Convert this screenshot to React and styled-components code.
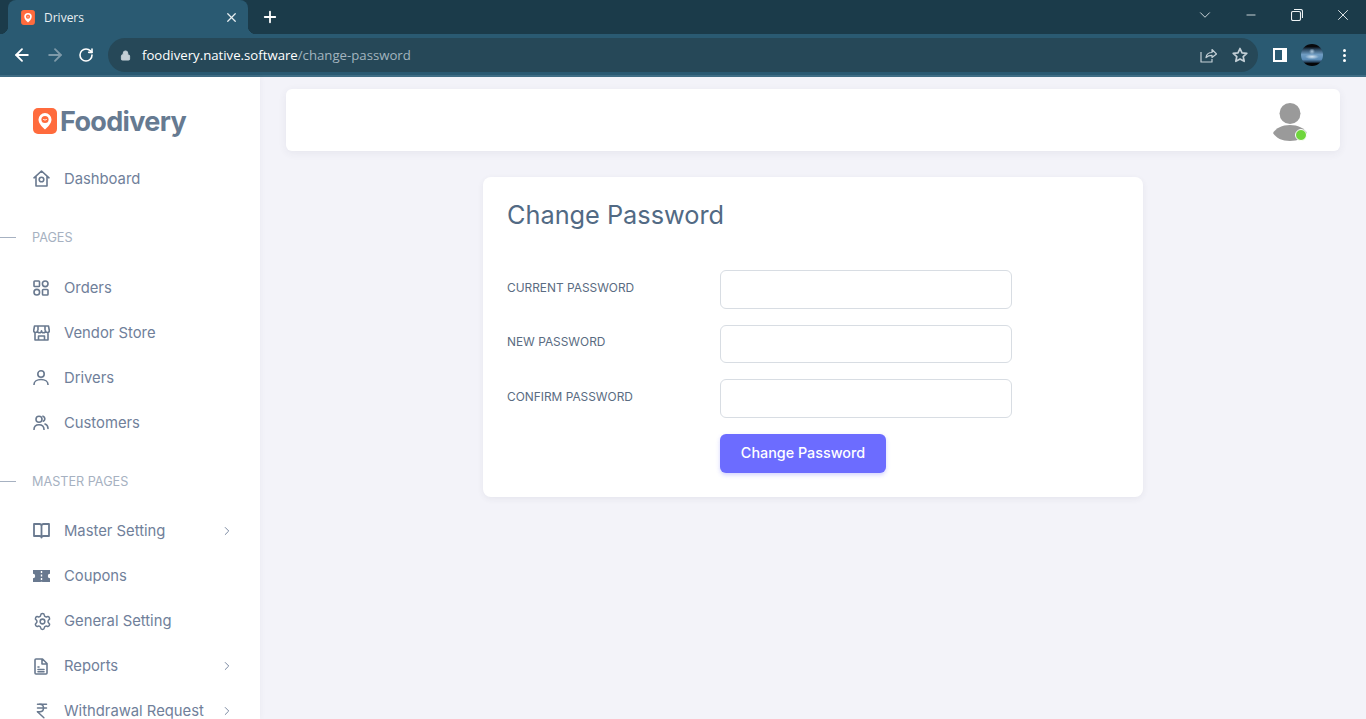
import React from "react";
import styled, { createGlobalStyle } from "styled-components";
import { ArrowLeft, ArrowRight, RotateCw, Lock, X, Plus, ChevronDown, Minus, ChevronRight, Settings, IndianRupee } from "lucide-react";

const Global = createGlobalStyle`
  html, body { margin: 0; height: 100%; overflow: hidden; background: #f3f3f9; }
  * { box-sizing: border-box; }
  #root { height: 100%; }
`;

const Shell = styled.div`
  display: flex; flex-direction: column; height: 719px; overflow: hidden;
  font-family: Inter, "Liberation Sans", sans-serif;
`;
const TabStrip = styled.div`
  height: 34px; background: #1b3b4a; display: flex; align-items: flex-end; padding-left: 8px; color: #fff;
  font-family: "Open Sans", "Noto Sans", sans-serif;
`;
const Tab = styled.div`
  position: relative; width: 240px; height: 34px; background: #2a5a72; border-radius: 8px 8px 0 0;
  display: flex; align-items: center; padding: 0 9px 0 13px; font-size: 12px; color: #e8eef1;
  &::before, &::after { content: ""; position: absolute; bottom: 0; width: 8px; height: 8px; }
  &::before { left: -8px; background: radial-gradient(circle at 0 0, #1b3b4a 8px, #2a5a72 8.5px); }
  &::after { right: -8px; background: radial-gradient(circle at 100% 0, #1b3b4a 8px, #2a5a72 8.5px); }
`;
const TabTitle = styled.span` margin-left: 9px; flex: 1; `;
const NewTab = styled.div` display: flex; margin-left: 13px; align-self: center; `;
const WindowControls = styled.div`
  margin-left: auto; display: flex; align-self: flex-start; color: #eef3f5;
`;
const WindowButton = styled.div`
  width: 46px; height: 29px; display: flex; align-items: center; justify-content: center;
`;
const Toolbar = styled.div`
  height: 43px; background: #2a5a72; border-bottom: 2px solid #3f6d85; display: flex; align-items: center; color: #fff;
  padding-top: 1px; font-family: "Open Sans", "Noto Sans", sans-serif;
`;
const NavButton = styled.div`
  width: 32px; display: flex; justify-content: center; flex: none; color: ${p => p.$dim ? "#7e9aa9" : "#fff"};
  padding-top: ${p => p.$drop || 0}px; margin-left: ${p => p.$shift || 0}px;
`;
const NavButtons = styled.div` display: flex; padding-left: 6px; gap: 0.5px; width: 108px; `;
const Omnibox = styled.div`
  width: 1150px; height: 34px; border-radius: 17px; background: #264858; display: flex; align-items: center; padding: 0 2px 0 12px; flex: none;
`;
const Url = styled.div` margin-left: 11px; font-size: 13.2px; color: #fff; flex: 1; `;
const UrlPath = styled.span` color: #a3b5bf; `;
const OmniIcon = styled.div` width: 32px; display: flex; justify-content: center; color: #c3cfd6; `;
const SidePanelIcon = styled.div`
  margin-left: 15px; width: 14px; height: 14px; border: 2px solid #fff; border-right-width: 5px; flex: none;
`;
const ProfileAvatar = styled.div`
  width: 22px; height: 22px; border-radius: 50%; margin-left: 14px; flex: none;
  background:
    radial-gradient(ellipse 7px 2.5px at 50% 58%, #d5e4f0, transparent),
    radial-gradient(circle 3px at 50% 34%, #a9c4da, transparent),
    linear-gradient(#08090c 0 12%, #2f4e68 26%, #6f9cc2 48%, #5b8db8 70%, #24405a 82%, #050507 88%);
`;
const Dots = styled.div`
  margin-left: 20px; display: flex; flex-direction: column; gap: 2px;
  & > i { display: block; width: 3px; height: 3px; border-radius: 50%; background: #fff; }
`;

const Page = styled.div` flex: 1; display: flex; min-height: 0; background: #f3f3f9; `;
const Sidebar = styled.aside`
  width: 260px; flex: none; background: #fff; box-shadow: 0 0 6px rgba(60,60,90,.06); overflow: hidden; padding-top: 31px; color: #6f7f95;
`;
const Logo = styled.div`
  display: flex; align-items: center; gap: 3px; padding-left: 33px; height: 26px; margin-bottom: 22.5px;
  font-size: 27px; font-weight: 700; color: #667a91; letter-spacing: -0.65px;
`;
const NavItem = styled.div`
  height: 44.9px; display: flex; align-items: center; padding-left: 33px; padding-right: 26px; font-size: 14.8px; color: #70809a;
`;
const IconSlot = styled.span` width: 31px; flex: none; display: flex; align-items: center; color: #69798f; `;
const ItemLabel = styled.span` flex: 1; white-space: nowrap; `;
const Section = styled.div`
  height: 64px; padding-top: ${p => p.$top}px; display: flex; align-items: center; gap: 16px; font-size: 12.65px; color: #a6b1c1;
  &::before { content: ""; width: 16px; height: 1px; background: #a6b1c1; }
`;

const Main = styled.main` flex: 1; min-width: 0; display: flex; flex-direction: column; align-items: center; padding: 12px 26px 0; `;
const TopBar = styled.header`
  width: 100%; height: 62px; background: #fff; border-radius: 6px; box-shadow: 0 2px 8px rgba(60,60,90,.07);
  display: flex; align-items: center; justify-content: flex-end; padding-right: 33px;
`;
const AvatarWrap = styled.div` position: relative; width: 34px; height: 38px; margin-top: 3px; `;
const OnlineDot = styled.span`
  position: absolute; right: 0; bottom: 0; width: 12px; height: 12px; border-radius: 50%; background: #6fd63c; border: 1.5px solid #fff;
`;
const Card = styled.section`
  width: 660px; margin-top: 26px; height: 320px; background: #fff; border-radius: 8px; box-shadow: 0 2px 6px rgba(60,60,90,.07); padding: 21px 24px 0;
`;
const Title = styled.h1`
  margin: 0 0 38px; font-size: 25.3px; line-height: 34px; font-weight: 400; color: #526a84;
`;
const FormRow = styled.div` display: flex; align-items: center; height: 38.5px; margin-bottom: 16px; `;
const FieldLabel = styled.label` width: 213px; flex: none; font-size: 11.9px; color: #5a6c82; margin-bottom: 4px; `;
const Input = styled.input`
  width: 292px; height: 38.5px; border: 1px solid #d8dde3; border-radius: 6px; background: #fff; outline: none;
`;
const ActionRow = styled.div` padding-left: 213px; `;
const Submit = styled.button`
  width: 166px; height: 39px; border: 0; border-radius: 6px; background: #6c6cff; color: #fff; font: 500 14.35px Inter, sans-serif;
  padding: 0 0 2px; box-shadow: 0 2px 4px rgba(108,108,255,.3);
`;

const s = { fill: "none", stroke: "currentColor", strokeLinecap: "round", strokeLinejoin: "round" };
const HomeIcon = () => <svg width="17" height="17" viewBox="0 0 17 17" {...s} strokeWidth="1.6"><path d="M1 7.800 8.500 1 16 7.800M3 6.500V16h11V6.500" /><circle cx="8.500" cy="9.500" r="2.300" /></svg>;
const GridIcon = () => <svg width="16" height="16" viewBox="0 0 16 16" {...s} strokeWidth="1.600"><rect x="1" y="1" width="5.500" height="5.500" rx=".8" /><circle cx="12.200" cy="3.800" r="2.800" /><circle cx="3.800" cy="12.200" r="2.800" /><rect x="9.500" y="9.500" width="5.500" height="5.500" rx=".8" /></svg>;
const StoreIcon = () => <svg width="17" height="16" viewBox="0 0 17 16" {...s} strokeWidth="1.600"><path d="M1.500 1h14l.8 4.500a1.900 1.900 0 0 1-3.800.300 2 2 0 0 1-4 0 2 2 0 0 1-4 0A1.900 1.900 0 0 1 .7 5.500zM2 8v7h13V8M5 1v4M12 1v4M5.500 15v-4h6v4" /></svg>;
const UserIcon = () => <svg width="16" height="15" viewBox="0 0 16 15" {...s} strokeWidth="1.600"><circle cx="8" cy="4" r="3.200" /><path d="M1 14.500c0-3 3-5 7-5s7 2 7 5" /></svg>;
const UsersIcon = () => <svg width="16" height="15" viewBox="0 0 16 15" {...s} strokeWidth="1.600"><circle cx="6" cy="4.300" r="3" /><path d="M1 14.500c0-3 2-4.800 5-4.800s5 1.800 5 4.800M10 1.200c1.500.6 2 2 1.700 3.300-.2.800-.7 1.300-1.300 1.700M12 9c2 .7 3 2.500 3 4.500" /></svg>;
const BookIcon = () => <svg width="17" height="16" viewBox="0 0 17 16" {...s} strokeWidth="1.800"><path d="M1 1h5.500c1.200 0 2 .8 2 2v11.500c0-.7-.8-1.500-2-1.500H1zM16 1h-5.500c-1.200 0-2 .8-2 2M8.500 14.500c0-.7.800-1.500 2-1.500H16V1" /></svg>;
const TicketIcon = () => <svg width="17" height="12" viewBox="0 0 17 12"><path fill="currentColor" d="M0 0h17v3.800a2.200 2.200 0 0 0 0 4.400V12H0V8.200a2.200 2.200 0 0 0 0-4.400z" /><path stroke="#fff" strokeWidth="1.400" strokeDasharray="2 1.600" d="M8.500 .9v11" /></svg>;
const DocIcon = () => <svg width="14" height="17" viewBox="0 0 14 17" {...s} strokeWidth="1.600" style={{ marginLeft: 1 }}><path d="M1 2a1 1 0 0 1 1-1h6.500L13 5.500V15a1 1 0 0 1-1 1H2a1 1 0 0 1-1-1zM8 1v5h5M4 9h1M4 11.500h6M4 13.800h6" /></svg>;
const ShareIcon = () => <svg width="17" height="16" viewBox="0 0 17 16" fill="none" stroke="currentColor" strokeWidth="1.200" strokeLinejoin="round"><path d="M1 5v10h11v-3M6 10.500c.5-3.500 3-5 6-5V2.500L16.500 7 12 10.500V8.300c-2.500 0-4.500.7-6 2.200z" /></svg>;
const StarIcon = () => <svg width="16" height="16" viewBox="0 0 16 16" fill="none" stroke="currentColor" strokeWidth="1.700" strokeLinejoin="round"><path d="m8 1.500 2 4.400 4.800.5-3.600 3.200 1 4.700L8 11.900l-4.200 2.400 1-4.700L1.200 6.400 6 5.900z" /></svg>;
const RestoreIcon = () => <svg width="12" height="12" viewBox="0 0 12 12" fill="none" stroke="currentColor" strokeWidth="1.100"><rect x=".5" y="2.500" width="9" height="9" rx="1.500" /><path d="M3 .5h6.500a2 2 0 0 1 2 2V9" /></svg>;
const BrandMark = ({ w, h }) => (
  <svg width={w} height={h} viewBox="0 0 24 26">
    <rect width="24" height="26" rx="5" fill="#ff6b3d" />
    <path fill="#fff" d="M12 5a6.500 6.500 0 0 0-6.500 6.500c0 4.300 4.600 8.300 6.500 10 1.900-1.700 6.500-5.700 6.500-10A6.500 6.500 0 0 0 12 5z" />
    <circle cx="12" cy="11.500" r="3.600" fill="#ff6b3d" />
    <path d="M10.200 11.300c.8.900 2.800.9 3.600 0" stroke="#fff" strokeWidth=".9" fill="none" />
  </svg>
);
const PersonIcon = () => (
  <svg width="34" height="38" viewBox="0 0 34 38"><circle cx="17" cy="10.500" r="10.500" fill="#9a9a9a" /><path fill="#9a9a9a" d="M0 30c3-5 9-8 17-8s14 3 17 8c-3 5-9 8-17 8S3 35 0 30z" /></svg>
);

const items1 = [["Orders", <GridIcon />], ["Vendor Store", <StoreIcon />], ["Drivers", <UserIcon />], ["Customers", <UsersIcon />]];
const items2 = [
  ["Master Setting", <BookIcon />, true],
  ["Coupons", <TicketIcon />],
  ["General Setting", <Settings size={19} strokeWidth={1.9} />],
  ["Reports", <DocIcon />, true],
  ["Withdrawal Request", <IndianRupee size={18} strokeWidth={2} />, true],
];
const Item = ({ label, icon, more }) => (
  <NavItem>
    <IconSlot>{icon}</IconSlot>
    <ItemLabel>{label}</ItemLabel>
    {more && <ChevronRight size={14} strokeWidth={1.6} />}
  </NavItem>
);
const Field = ({ label }) => (
  <FormRow><FieldLabel>{label}</FieldLabel><Input type="password" /></FormRow>
);

export default function App() {
  return (
    <Shell>
      <Global />
      <TabStrip>
        <Tab>
          <BrandMark w={14} h={15} />
          <TabTitle>Drivers</TabTitle>
          <X size={15} strokeWidth={2} />
        </Tab>
        <NewTab><Plus size={18} strokeWidth={2.4} /></NewTab>
        <WindowControls>
          <WindowButton><ChevronDown size={18} strokeWidth={1.1} /></WindowButton>
          <WindowButton><Minus size={14} strokeWidth={1.4} /></WindowButton>
          <WindowButton><RestoreIcon /></WindowButton>
          <WindowButton><X size={18} strokeWidth={1.2} /></WindowButton>
        </WindowControls>
      </TabStrip>
      <Toolbar>
        <NavButtons>
          <NavButton><ArrowLeft size={20} strokeWidth={2.2} /></NavButton>
          <NavButton $dim><ArrowRight size={20} strokeWidth={2.2} /></NavButton>
          <NavButton $drop={2} $shift={-1}><RotateCw size={16} strokeWidth={2.4} /></NavButton>
        </NavButtons>
        <Omnibox>
          <Lock size={11} fill="#c3cfd6" color="#c3cfd6" />
          <Url>foodivery.native.software<UrlPath>/change-password</UrlPath></Url>
          <OmniIcon><ShareIcon /></OmniIcon>
          <OmniIcon><StarIcon /></OmniIcon>
        </Omnibox>
        <SidePanelIcon />
        <ProfileAvatar />
        <Dots><i /><i /><i /></Dots>
      </Toolbar>
      <Page>
        <Sidebar>
          <Logo><BrandMark w={24} h={26} />Foodivery</Logo>
          <Item label="Dashboard" icon={<HomeIcon />} />
          <Section $top={9}>PAGES</Section>
          {items1.map(([l, i]) => <Item key={l} label={l} icon={i} />)}
          <Section $top={8.5}>MASTER PAGES</Section>
          {items2.map(([l, i, m]) => <Item key={l} label={l} icon={i} more={m} />)}
        </Sidebar>
        <Main>
          <TopBar>
            <AvatarWrap><PersonIcon /><OnlineDot /></AvatarWrap>
          </TopBar>
          <Card>
            <Title>Change Password</Title>
            <Field label="CURRENT PASSWORD" />
            <Field label="NEW PASSWORD" />
            <Field label="CONFIRM PASSWORD" />
            <ActionRow><Submit>Change Password</Submit></ActionRow>
          </Card>
        </Main>
      </Page>
    </Shell>
  );
}
